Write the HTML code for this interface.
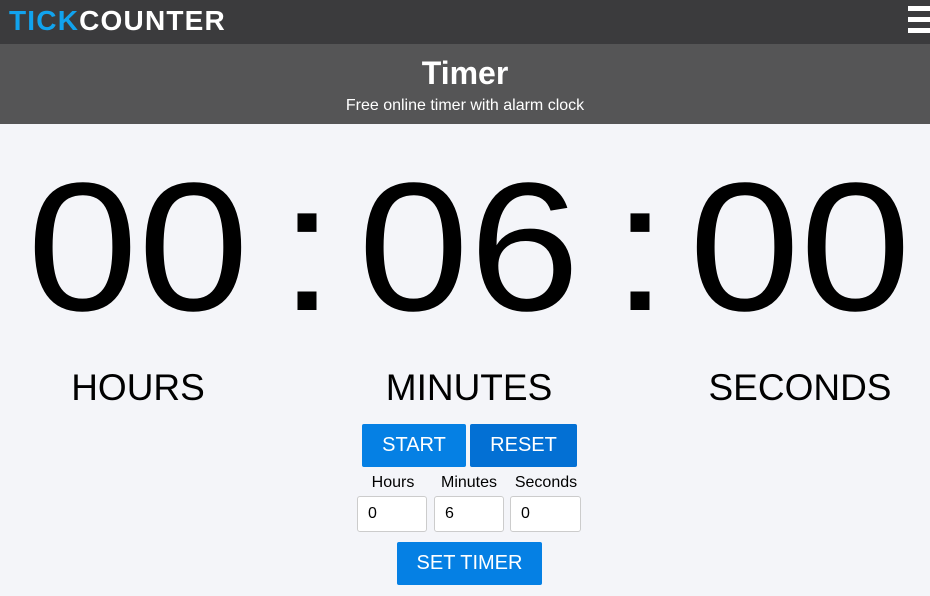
<!DOCTYPE html>
<html><head><style>
body{margin:0;width:930px;height:596px;background:#f4f5f9;font-family:"Liberation Sans",Arial,sans-serif;position:relative;overflow:hidden}
.top{position:absolute;left:0;top:0;width:930px;height:44px;background:#3b3b3d}
.logo{position:absolute;left:9px;top:5px;font-size:28px;font-weight:bold;letter-spacing:1.2px;color:#fff}
.logo span{color:#11a3ee}
.ham{position:absolute;left:908px;top:6px;width:22px}
.ham div{height:5px;background:#fff;margin-bottom:6px}
.hdr{position:absolute;left:0;top:44px;width:930px;height:80px;background:#555556;color:#fff;text-align:center}
.hdr h1{margin:0;position:absolute;top:11px;width:100%;font-size:32px;font-weight:bold}
.hdr p{margin:0;position:absolute;top:53px;width:100%;font-size:16px}
.d{position:absolute;top:137px;font-size:183px;line-height:220px;width:300px;text-align:center;color:#000;transform:scaleX(1.09)}
.l{position:absolute;top:367px;font-size:37px;width:300px;text-align:center}
.btn{position:absolute;background:#0580e4;color:#fff;font-size:20px;text-align:center;border-radius:2px}
.lab{position:absolute;top:474px;font-size:16px;width:80px;text-align:center}
.inp{position:absolute;top:496px;width:70px;background:#fff;border:1px solid #ccc;border-radius:3px;font-size:16px;line-height:34px;box-sizing:border-box;padding-left:10px;height:36px}
</style></head><body>
<div class="top"><div class="logo"><span>TICK</span>COUNTER</div>
<div class="ham"><div></div><div></div><div></div></div></div>
<div class="hdr"><h1>Timer</h1><p>Free online timer with alarm clock</p></div>
<div class="d" style="left:-12px">00</div>
<div class="d" style="left:157px">:</div>
<div class="d" style="left:319px">06</div>
<div class="d" style="left:490px">:</div>
<div class="d" style="left:650px">00</div>
<div class="l" style="left:-12px">HOURS</div>
<div class="l" style="left:319px">MINUTES</div>
<div class="l" style="left:650px">SECONDS</div>
<div class="btn" style="left:362px;top:424px;width:104px;height:43px;line-height:43px">START</div>
<div class="btn" style="left:470px;top:424px;width:107px;height:43px;line-height:43px;background:#0370d4">RESET</div>
<div class="lab" style="left:353px">Hours</div>
<div class="lab" style="left:429px">Minutes</div>
<div class="lab" style="left:506px">Seconds</div>
<div class="inp" style="left:357px">0</div>
<div class="inp" style="left:434px">6</div>
<div class="inp" style="left:510px;width:71px">0</div>
<div class="btn" style="left:397px;top:542px;width:145px;height:43px;line-height:43px">SET TIMER</div>
</body></html>
